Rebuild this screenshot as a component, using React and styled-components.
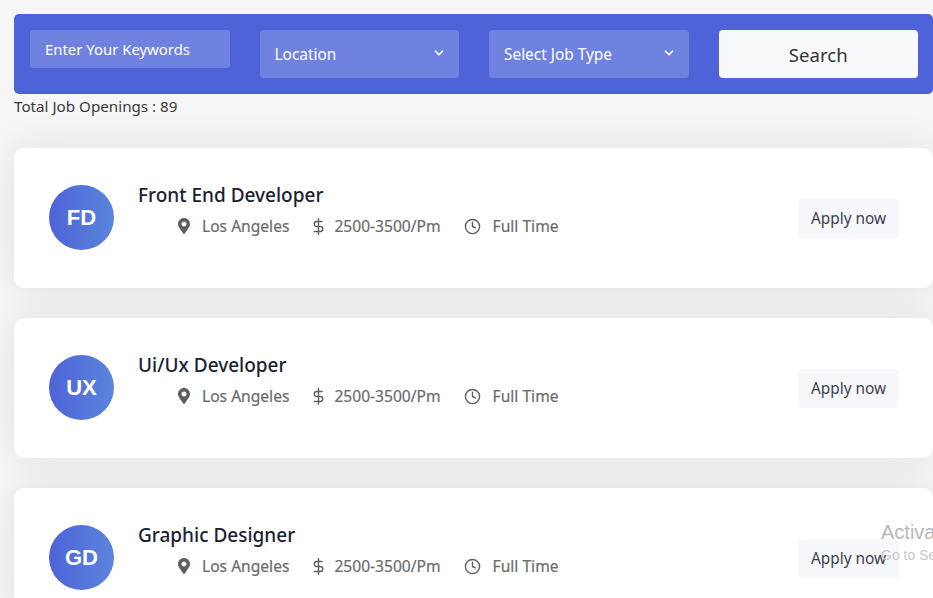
import React from 'react'
import styled, { createGlobalStyle } from 'styled-components'
import { FaMapMarkerAlt } from 'react-icons/fa'
import { FiClock, FiChevronDown, FiDollarSign } from 'react-icons/fi'

const GlobalStyle = createGlobalStyle`
  html, body {
    margin: 0;
    padding: 0;
    height: 598px;
    overflow: hidden;
    background: #f6f6f6;
    font-family: 'Noto Sans', 'Open Sans', sans-serif;
    color: #212529;
  }
  * { box-sizing: border-box; }
`

const Page = styled.div`
  position: relative;
  width: 933px;
  height: 598px;
  overflow: hidden;
  padding: 14px 0 0 14px;
`

const SearchBar = styled.form`
  display: grid;
  grid-template-columns: repeat(4, 199.5px);
  column-gap: 30px;
  align-items: start;
  height: 80px;
  padding: 16px 15px 16px 16px;
  background: #4e63d7;
  border-radius: 5px;
`

const Keywords = styled.div`
  height: 38px;
  padding-left: 15px;
  line-height: 38px;
  font-size: 14.9px;
  color: #fff;
  background: #7082e0;
  border-radius: 3px;
  white-space: nowrap;
`

const Select = styled.div`
  display: flex;
  align-items: center;
  justify-content: space-between;
  height: 48px;
  padding: 0 13px 0 15px;
  font-size: 15.4px;
  color: #fff;
  background: #7082e0;
  border-radius: 4px;
  white-space: nowrap;
  svg {
    margin-top: -3px;
    stroke-width: 3;
  }
`

const SearchButton = styled.button`
  height: 48px;
  border: 0;
  border-radius: 4px;
  background: #f8f9fa;
  color: #333;
  font-family: inherit;
  font-size: 18.6px;
`

const TotalCount = styled.p`
  margin: 1px 0 0;
  height: 22px;
  line-height: 22px;
  font-size: 15.2px;
  color: #3a3a3a;
`

const JobList = styled.div`
  display: flex;
  flex-direction: column;
  gap: 30px;
  margin-top: 31px;
`

const JobCard = styled.article`
  display: flex;
  align-items: flex-start;
  height: 140px;
  padding: 37px 34px 0 35px;
  background: #fff;
  border-radius: 10px;
  box-shadow: 0 0 40px rgba(0, 0, 0, 0.09);
`

const Avatar = styled.div`
  display: flex;
  align-items: center;
  justify-content: center;
  flex: none;
  width: 65px;
  height: 65px;
  margin-right: 24px;
  border-radius: 50%;
  background: linear-gradient(90deg, #4e63d7, #5a85dd);
  color: #fff;
  font-family: 'Liberation Sans', Arial, sans-serif;
  font-size: 22px;
  font-weight: 700;
`

const JobInfo = styled.div`
  flex: 1;
`

const JobTitle = styled.h4`
  margin: -1px 0 0;
  height: 22px;
  line-height: 22px;
  font-size: 19px;
  font-weight: 500;
  color: #1b2130;
`

const MetaList = styled.ul`
  display: flex;
  gap: 23px;
  margin: 8px 0 0;
  padding: 0 0 0 40px;
  list-style: none;
`

const MetaItem = styled.li`
  display: flex;
  align-items: center;
  height: 24px;
  font-size: 15.6px;
  color: #6b6b6b;
  -webkit-text-stroke: 0.2px #6b6b6b;
  white-space: nowrap;
`

const MetaIcon = styled.span`
  display: flex;
  justify-content: center;
  flex: none;
  width: ${(p) => p.$width}px;
  margin-right: ${(p) => p.$gap}px;
  color: #5f5f5f;
  svg { flex: none; }
`

const ApplyButton = styled.a`
  display: flex;
  align-items: center;
  justify-content: center;
  flex: none;
  width: 101px;
  height: 39px;
  margin-top: 14px;
  font-size: 15.4px;
  color: #3a4050;
  background: #f7f8fb;
  border-radius: 4px;
`

const Watermark = styled.div`
  position: absolute;
  left: 881px;
  top: 520px;
  color: #b8b8b8;
  font-family: 'Liberation Sans', Arial, sans-serif;
  white-space: nowrap;
`

const WatermarkTitle = styled.div`
  font-size: 20px;
  line-height: 24px;
`

const WatermarkText = styled.div`
  font-size: 14px;
  line-height: 22px;
  color: #c8c8c8;
`

const jobs = [
  { initials: 'FD', title: 'Front End Developer' },
  { initials: 'UX', title: 'Ui/Ux Developer' },
  { initials: 'GD', title: 'Graphic Designer' },
]

const App = () => {
  return (
    <Page>
      <GlobalStyle />
      <SearchBar>
        <Keywords>Enter Your Keywords</Keywords>
        <Select>
          Location
          <FiChevronDown size={14} />
        </Select>
        <Select>
          Select Job Type
          <FiChevronDown size={14} />
        </Select>
        <SearchButton type='button'>Search</SearchButton>
      </SearchBar>
      <TotalCount>Total Job Openings : 89</TotalCount>
      <JobList>
        {jobs.map((job) => (
          <JobCard key={job.initials}>
            <Avatar>{job.initials}</Avatar>
            <JobInfo>
              <JobTitle>{job.title}</JobTitle>
              <MetaList>
                <MetaItem>
                  <MetaIcon $width={12} $gap={12}><FaMapMarkerAlt size={16} /></MetaIcon>
                  Los Angeles
                </MetaItem>
                <MetaItem>
                  <MetaIcon $width={12} $gap={10}><FiDollarSign size={17} /></MetaIcon>
                  2500-3500/Pm
                </MetaItem>
                <MetaItem>
                  <MetaIcon $width={17} $gap={12}><FiClock size={17} /></MetaIcon>
                  Full Time
                </MetaItem>
              </MetaList>
            </JobInfo>
            <ApplyButton>Apply now</ApplyButton>
          </JobCard>
        ))}
      </JobList>
      <Watermark>
        <WatermarkTitle>Activate Windows</WatermarkTitle>
        <WatermarkText>Go to Settings to activate Windows.</WatermarkText>
      </Watermark>
    </Page>
  )
}

export default App
